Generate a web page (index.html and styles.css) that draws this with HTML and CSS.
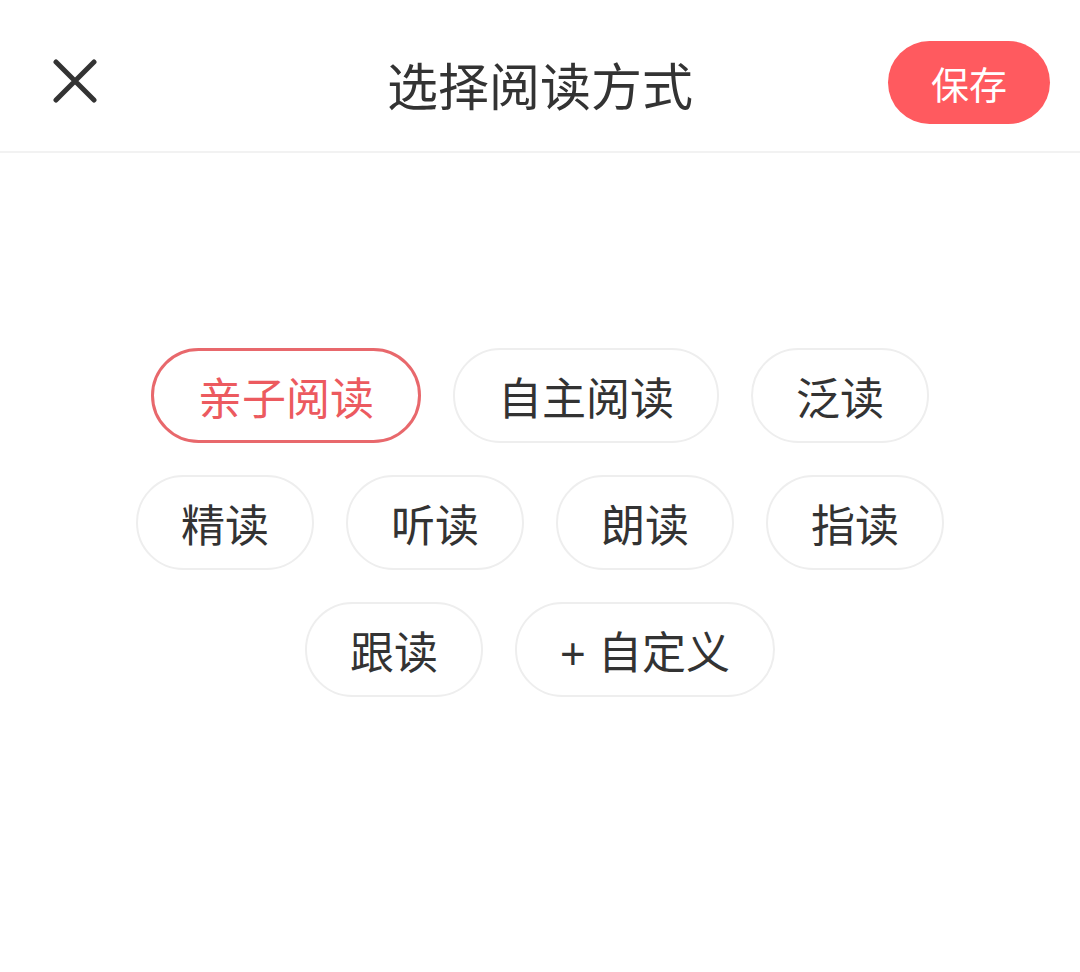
FILE: index.html
```html
<!DOCTYPE html>
<html>
    <head>
        <meta charset="utf-8">
        <title>选择阅读方式</title>
<link rel="stylesheet" href="styles.css">
    </head>
    <body>
        <div class="header">
            <div class="close">
                <svg width="44" height="44" viewBox="0 0 44 44">
                    <path d="M3 3 L41 41 M41 3 L3 41" stroke="#333" stroke-width="5" stroke-linecap="round" fill="none"/>
                </svg>
            </div>
            <div class="title">选择阅读方式</div>
            <div class="right">
                <button class="savebtn">保存</button>
            </div>
        </div>

        <div class="content">
            <div class="chips">
                <span class="chip selected">亲子阅读</span>
                <span class="chip">自主阅读</span>
                <span class="chip">泛读</span>
                <span class="chip">精读</span>
                <span class="chip">听读</span>
                <span class="chip">朗读</span>
                <span class="chip">指读</span>
                <span class="chip">跟读</span>
                <span class="chip">+ 自定义</span>
            </div>
        </div>
    </body>
</html>
```

FILE: styles.css
```css
body {
  margin: 0;
  background-color: white;
  font-family: 'Liberation Sans', 'Noto Sans CJK SC', sans-serif;
  color: #333333;
}

.header {
  height: 139px;
  padding: 12px 30px 0 30px;
  display: grid;
  grid-template-columns: 1fr auto 1fr;
  align-items: center;
  border-bottom: 2px solid #f2f2f2;
}

.close {
  display: flex;
  align-items: center;
  padding-left: 23px;
  padding-bottom: 2px;
}

.title {
  font-size: 51px;
  padding-top: 4px;
}

.right {
  display: flex;
  justify-content: flex-end;
}

.savebtn {
  width: 162px;
  height: 83px;
  border: none;
  border-radius: 42px;
  background-color: #ff5a5f;
  color: white;
  font-family: 'Liberation Sans', 'Noto Sans CJK SC', sans-serif;
  font-size: 38px;
  padding: 0;
  margin-top: 2px;
}

.content {
  padding-top: 195px;
}

.chips {
  width: 900px;
  margin: 0 auto;
  display: flex;
  flex-wrap: wrap;
  justify-content: center;
  gap: 32px;
}

.chip {
  box-sizing: border-box;
  height: 95px;
  padding: 0 43px;
  border: 2px solid #eeeeee;
  border-radius: 48px;
  display: flex;
  align-items: center;
  font-size: 44px;
  color: #333333;
}

.chip.selected {
  border: 3px solid #e8686c;
  color: #ec5a5f;
  padding: 0 44px;
}
```
